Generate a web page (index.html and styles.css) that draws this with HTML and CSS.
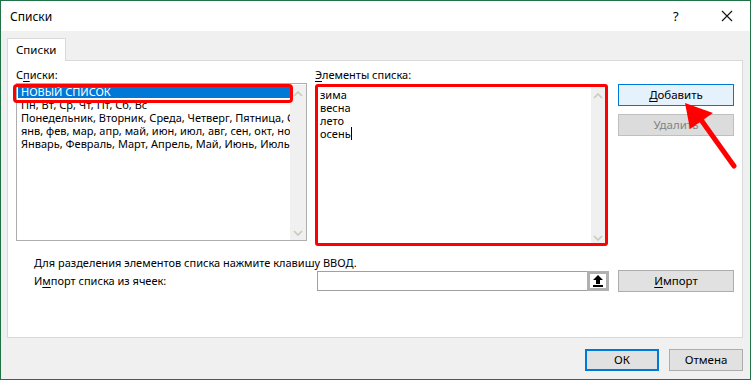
FILE: index.html
```html
<!DOCTYPE html>
<html lang="ru">
<head>
    <meta charset="UTF-8">
    <title>Списки</title>
    <link rel="stylesheet" href="styles.css">
</head>
<body>
    <div class="dialog">
        <div class="titlebar">
            <span class="title">Списки</span>
            <span class="help">?</span>
            <span class="close">
                <svg width="12" height="12" viewBox="0 0 12 12"><path d="M1 1L11 11M11 1L1 11" stroke="#111" stroke-width="1.1"/></svg>
            </span>
        </div>

        <div class="content">
            <div class="tabs">
                <div class="tab">Списки</div>
            </div>

            <div class="panel">
                <div class="top-row">
                    <div class="col-lists">
                        <div class="label">С<u>п</u>иски:</div>
                        <div class="listbox">
                            <div class="items">
                                <div class="item selected">НОВЫЙ СПИСОК</div>
                                <div class="item">Пн, Вт, Ср, Чт, Пт, Сб, Вс</div>
                                <div class="item">Понедельник, Вторник, Среда, Четверг, Пятница, Суббота, Воскресенье</div>
                                <div class="item">янв, фев, мар, апр, май, июн, июл, авг, сен, окт, ноя, дек</div>
                                <div class="item">Январь, Февраль, Март, Апрель, Май, Июнь, Июль, Август</div>
                            </div>
                            <div class="scrollbar">
                                <svg width="10" height="6" viewBox="0 0 10 6"><path d="M1 5L5 1L9 5" fill="none" stroke="#c4cdb9" stroke-width="1.6"/></svg>
                                <svg width="10" height="6" viewBox="0 0 10 6"><path d="M1 1L5 5L9 1" fill="none" stroke="#c4cdb9" stroke-width="1.6"/></svg>
                            </div>
                            <div class="mark mark-selected"></div>
                        </div>
                    </div>

                    <div class="col-entries">
                        <div class="label"><u>Э</u>лементы списка:</div>
                        <div class="entries">
                            <div class="lines">
                                <div>зима</div>
                                <div>весна</div>
                                <div>лето</div>
                                <div>осень<span class="caret"></span></div>
                            </div>
                            <div class="scrollbar">
                                <svg width="10" height="6" viewBox="0 0 10 6"><path d="M1 5L5 1L9 5" fill="none" stroke="#c4cdb9" stroke-width="1.6"/></svg>
                                <svg width="10" height="6" viewBox="0 0 10 6"><path d="M1 1L5 5L9 1" fill="none" stroke="#c4cdb9" stroke-width="1.6"/></svg>
                            </div>
                        </div>
                    </div>

                    <div class="col-buttons">
                        <button class="btn btn-hover"><u>Д</u>обавить</button>
                        <button class="btn btn-disabled">Удалить</button>
                        <svg class="pointer" width="60" height="70" viewBox="0 0 60 70">
                            <path d="M15 15L50 64" stroke="#ff0000" stroke-width="5" stroke-linecap="round"/>
                            <polygon points="1,1 29,11 6,27" fill="#ff0000"/>
                        </svg>
                    </div>
                </div>

                <div class="hint">Для разделения элементов списка нажмите клавишу ВВОД.</div>

                <div class="import-row">
                    <div class="import-label">И<u>м</u>порт списка из ячеек:</div>
                    <div class="range-input">
                        <div class="range-field"></div>
                        <div class="range-btn">
                            <svg width="12" height="12" viewBox="0 0 12 12">
                                <polygon points="6,0 11,5 8,5 8,9 4,9 4,5 1,5" fill="#000"/>
                                <rect x="1" y="10" width="10" height="2" fill="#000"/>
                            </svg>
                        </div>
                    </div>
                    <button class="btn"><u>И</u>мпорт</button>
                </div>
            </div>

            <div class="footer">
                <button class="btn btn-default">ОК</button>
                <button class="btn">Отмена</button>
            </div>
        </div>
    </div>
</body>
</html>
```

FILE: styles.css
```css
* {
    box-sizing: border-box;
}

body {
    margin: 0;
    font-family: "Noto Sans", "Open Sans", sans-serif;
    font-size: 11px;
    color: #000;
}

u {
    text-decoration-thickness: 1px;
    text-underline-offset: 2px;
}

.dialog {
    width: 751px;
    height: 380px;
    border: 1px solid #1f7146;
    background: #f0f0f0;
}

.titlebar {
    height: 30px;
    background: #fff;
    display: flex;
    align-items: center;
    padding-left: 9px;
}

.title {
    flex: 1;
    font-size: 12px;
}

.help {
    width: 18px;
    font-size: 13px;
    margin-right: 30px;
}

.close {
    width: 12px;
    height: 12px;
    margin-right: 17px;
    display: flex;
}

.content {
    padding: 7px 6px 0 6px;
}

.tabs {
    display: flex;
    height: 22px;
}

.tab {
    width: 59px;
    height: 23px;
    background: #fff;
    border: 1px solid #d9d9d9;
    border-bottom: none;
    padding: 3px 0 0 8px;
    font-size: 11.5px;
    position: relative;
    z-index: 1;
}

.panel {
    height: 278px;
    width: 736px;
    background: #fff;
    border: 1px solid #d9d9d9;
    padding: 7px 0 0 8px;
}

.top-row {
    display: flex;
}

.label {
    height: 15px;
    line-height: 14px;
}

.col-lists {
    width: 291px;
}

.listbox {
    position: relative;
    height: 158px;
    border: 1px solid #adadad;
    display: flex;
    padding: 1px 0 0 0;
}

.items {
    flex: 1;
    overflow: hidden;
    padding-left: 1px;
}

.item {
    height: 13px;
    line-height: 13px;
    white-space: nowrap;
    padding-left: 3px;
}

.selected {
    background: #0078d7;
    color: #fff;
}

.scrollbar {
    width: 16px;
    background: #f0f0f0;
    display: flex;
    flex-direction: column;
    justify-content: space-between;
    align-items: center;
    padding: 6px 0 4px 0;
}

.mark {
    position: absolute;
    border: 3px solid #ff0000;
    border-radius: 4px;
}

.mark-selected {
    left: -4px;
    top: 0;
    width: 280px;
    height: 19px;
}

.col-entries {
    width: 293px;
    margin-left: 8px;
}

.entries {
    margin-top: 1px;
    height: 162px;
    border: 3px solid #ff0000;
    border-radius: 3px;
    display: flex;
}

.entries .scrollbar {
    width: 14px;
    padding-bottom: 2px;
}

.lines {
    flex: 1;
    padding: 1px 0 0 2px;
    line-height: 13px;
}

.caret {
    display: inline-block;
    width: 1px;
    height: 13px;
    background: #000;
    vertical-align: top;
}

.col-buttons {
    width: 116px;
    margin-left: 10px;
    padding-top: 16px;
    position: relative;
}

.btn {
    display: block;
    width: 116px;
    height: 22px;
    font-family: inherit;
    font-size: 11.5px;
    color: #000;
    background: #e1e1e1;
    border: 1px solid #adadad;
    padding: 0;
    line-height: 18px;
}

.btn-hover {
    background: #e5f1fb;
    border-color: #0078d7;
}

.btn-disabled {
    margin-top: 8px;
    background: #dcdcdc;
    border-color: #bfbfbf;
    color: #838383;
}

.pointer {
    position: absolute;
    left: 66px;
    top: 34px;
}

.hint {
    margin: 9px 0 0 18px;
    height: 15px;
    line-height: 15px;
}

.import-row {
    display: flex;
    align-items: center;
    height: 21px;
}

.import-label {
    width: 283px;
    margin-left: 18px;
}

.range-input {
    width: 292px;
    height: 20px;
    display: flex;
    border: 1px solid #a0a0a0;
    border-right: none;
}

.range-field {
    flex: 1;
}

.range-btn {
    width: 22px;
    height: 20px;
    margin-top: -1px;
    border: 3px solid #b0b0b0;
    background: #fff;
    display: flex;
    align-items: center;
    justify-content: center;
}

.import-row .btn {
    margin-left: 9px;
}

.footer {
    display: flex;
    justify-content: flex-end;
    gap: 10px;
    padding: 11px 1px 0 0;
}

.footer .btn {
    width: 74px;
}

.btn-default {
    border: 2px solid #0078d7;
}
```
